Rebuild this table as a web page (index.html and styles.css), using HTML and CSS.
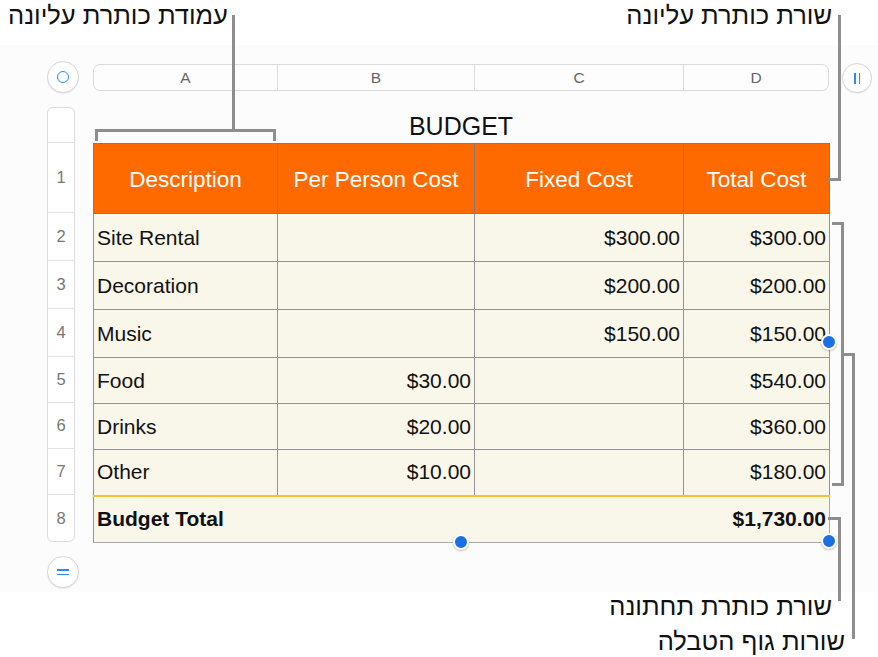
FILE: index.html
```html
<!DOCTYPE html>
<html lang="he">
<head>
<meta charset="utf-8">
<title>Budget</title>
<link rel="stylesheet" href="styles.css">
</head>
<body>
<div class="page">
  <header class="top-labels">
    <span class="label label-col" dir="rtl">עמודת כותרת עליונה</span>
    <span class="label label-row" dir="rtl">שורת כותרת עליונה</span>
  </header>

  <main class="sheet">
    <div class="sheet-grid">
      <div class="circle-btn select-btn"><span class="ring"></span></div>
      <div class="col-bar">
        <span class="col-a">A</span><span class="col-b">B</span><span class="col-c">C</span><span class="col-d">D</span>
      </div>
      <div class="circle-btn pause-btn"><span class="bar"></span><span class="bar"></span></div>

      <div class="row-bar">
        <span class="rh rh-top"></span>
        <span class="rh rh-head">1</span>
        <span class="rh rh-48">2</span>
        <span class="rh rh-48">3</span>
        <span class="rh rh-48">4</span>
        <span class="rh rh-46">5</span>
        <span class="rh rh-46">6</span>
        <span class="rh rh-46">7</span>
        <span class="rh rh-foot">8</span>
      </div>

      <div class="table-wrap">
        <div class="title">BUDGET</div>
        <table class="budget">
          <colgroup><col class="w-a"><col class="w-b"><col class="w-c"><col class="w-d"></colgroup>
          <thead>
            <tr class="r-head"><th>Description</th><th>Per Person Cost</th><th>Fixed Cost</th><th>Total Cost</th></tr>
          </thead>
          <tbody>
            <tr class="r-48"><td>Site Rental</td><td class="num"></td><td class="num">$300.00</td><td class="num">$300.00</td></tr>
            <tr class="r-48"><td>Decoration</td><td class="num"></td><td class="num">$200.00</td><td class="num">$200.00</td></tr>
            <tr class="r-48"><td>Music</td><td class="num"></td><td class="num">$150.00</td><td class="num">$150.00</td></tr>
            <tr class="r-46"><td>Food</td><td class="num">$30.00</td><td class="num"></td><td class="num">$540.00</td></tr>
            <tr class="r-46"><td>Drinks</td><td class="num">$20.00</td><td class="num"></td><td class="num">$360.00</td></tr>
            <tr class="r-46"><td>Other</td><td class="num">$10.00</td><td class="num"></td><td class="num">$180.00</td></tr>
          </tbody>
          <tfoot>
            <tr class="r-foot"><td colspan="3" class="foot-l">Budget Total</td><td class="num foot-r">$1,730.00</td></tr>
          </tfoot>
        </table>
      </div>

      <div class="circle-btn eq-btn"><span class="eq"></span><span class="eq"></span></div>
    </div>
  </main>

  <footer class="bottom-labels">
    <span class="label label-foot" dir="rtl">שורת כותרת תחתונה</span>
    <span class="label label-body" dir="rtl">שורות גוף הטבלה</span>
  </footer>

  <!-- callout lines -->
  <div class="ln col-stem"></div>
  <div class="ln col-bracket"></div>
  <div class="ln head-stem"></div>
  <div class="ln body-bracket"></div>
  <div class="ln body-link"></div>
  <div class="ln foot-link"></div>

  <!-- selection handles -->
  <span class="handle h1"></span>
  <span class="handle h2"></span>
  <span class="handle h3"></span>
</div>
</body>
</html>
```

FILE: styles.css
```css
* { box-sizing: border-box; }
html, body { margin: 0; padding: 0; background: #ffffff; }
body {
  font-family: "Liberation Sans", Arial, "DejaVu Sans", sans-serif;
  color: #111;
}
.page {
  position: relative;
  width: 878px;
  height: 657px;
  overflow: hidden;
  background: #fff;
}

/* labels */
.label {
  font-size: 25.5px;
  line-height: 28px;
  color: #111;
  white-space: nowrap;
}
.top-labels {
  height: 45px;
  display: flex;
  justify-content: space-between;
  align-items: flex-start;
  padding: 1px 46px 0 8px;
}
.bottom-labels {
  display: flex;
  flex-direction: column;
  align-items: flex-end;
}
.label-foot { margin-right: 46px; height: 35px; }
.label-body { margin-right: 33px; }

/* sheet area */
.sheet {
  height: 547px;
  background: #fcfcfc;
  padding: 16px 0 0 47px;
}
.sheet-grid {
  display: grid;
  grid-template-columns: 32px 14px 736px 13px 31px;
  grid-template-rows: 32px 435px 32px;
  row-gap: 14px;
}

.circle-btn {
  width: 32px;
  height: 32px;
  border-radius: 50%;
  border: 1px solid #d6d6d6;
  background: #fff;
  box-shadow: 0 1px 1px rgba(0,0,0,0.08);
  display: flex;
  align-items: center;
  justify-content: center;
  gap: 3px;
}
.select-btn { grid-column: 1; grid-row: 1; }
.ring {
  width: 12px;
  height: 12px;
  border-radius: 50%;
  border: 1.6px solid #2d8cf0;
}
.pause-btn {
  grid-column: 5; grid-row: 1;
  width: 30px; height: 30px;
  margin-top: 2px;
}
.pause-btn .bar {
  width: 1.5px;
  height: 11px;
  background: #2d8cf0;
}
.eq-btn {
  grid-column: 1; grid-row: 3;
  flex-direction: column;
  gap: 3px;
}
.eq {
  width: 12px;
  height: 1.5px;
  background: #2d8cf0;
}

/* column header bar */
.col-bar {
  grid-column: 3; grid-row: 1;
  height: 27px;
  margin-top: 3px;
  border: 1px solid #dadada;
  border-radius: 7px;
  background: #fdfdfd;
  display: flex;
  font-size: 15.5px;
  color: #666;
}
.col-bar span {
  display: flex;
  align-items: center;
  justify-content: center;
  border-right: 1px solid #dcdcdc;
}
.col-bar span:last-child { border-right: 0; }
.col-a { width: 184px; }
.col-b { width: 197px; }
.col-c { width: 209px; }
.col-d { flex: 1; }

/* row header bar */
.row-bar {
  grid-column: 1; grid-row: 2;
  width: 28px;
  border: 1px solid #dcdcdc;
  border-radius: 6px;
  background: #fff;
  display: flex;
  flex-direction: column;
  overflow: hidden;
}
.rh {
  display: flex;
  align-items: center;
  justify-content: center;
  font-size: 16.5px;
  color: #777;
  border-bottom: 1px solid #e2e2e2;
}
.rh:last-child { border-bottom: 0; flex: 1; }
.rh-top { height: 35px; }
.rh-head { height: 70px; }
.rh-48 { height: 48px; }
.rh-46 { height: 46px; }

/* table */
.table-wrap {
  grid-column: 3; grid-row: 2;
  display: flex;
  flex-direction: column;
}
.title {
  height: 36px;
  line-height: 38px;
  text-align: center;
  font-size: 25px;
  color: #111;
}
.budget {
  width: 736px;
  table-layout: fixed;
  border-collapse: collapse;
  font-size: 21px;
}
.w-a { width: 184px; }
.w-b { width: 197px; }
.w-c { width: 209px; }
.w-d { width: 146px; }

.budget th {
  background: #ff6a00;
  color: #fff;
  font-weight: normal;
  font-size: 22.5px;
  border: 1px solid #7d7d7d;
  padding: 3px 0 0;
  text-align: center;
}
.budget td {
  background: #f9f6ea;
  border: 1px solid #939393;
  padding: 0 3px;
  white-space: nowrap;
}
.budget td.num { text-align: right; padding-right: 3px; }
.r-head th { height: 70px; }
.r-48 td { height: 48px; }
.r-46 td { height: 46px; }
.r-foot td {
  height: 47px;
  border-top: 2px solid #f4c232;
  border-bottom: 1px solid #a8a8a8;
  font-weight: bold;
}
.budget td.foot-l { border-right: 0; }
.budget td.foot-r { border-left: 0; border-right: 1px solid #a8a8a8; }

/* callout lines */
.ln { position: absolute; border-color: #8e8e8e; border-style: solid; border-width: 0; }
.col-stem { left: 232px; top: 15px; width: 3px; height: 116px; background: #8e8e8e; }
.col-bracket {
  left: 95px; top: 129px; width: 181px; height: 12px;
  border-width: 3px 3px 0 3px;
}
.head-stem {
  left: 828px; top: 15px; width: 13px; height: 166px;
  border-width: 0 3px 3px 0;
}
.body-bracket {
  left: 832px; top: 222px; width: 12px; height: 264px;
  border-width: 3px 3px 3px 0;
}
.body-link {
  left: 844px; top: 353px; width: 11px; height: 286px;
  border-width: 3px 3px 0 0;
}
.foot-link {
  left: 828px; top: 517px; width: 13px; height: 84px;
  border-width: 3px 3px 0 0;
}

/* handles */
.handle {
  position: absolute;
  width: 16px;
  height: 16px;
  border-radius: 50%;
  background: #1a6fe3;
  border: 2.5px solid #fff;
  box-shadow: 0 1px 2px rgba(0,0,0,0.25);
}
.h1 { left: 821px; top: 334px; }
.h2 { left: 453px; top: 534px; }
.h3 { left: 821px; top: 533px; }
```
